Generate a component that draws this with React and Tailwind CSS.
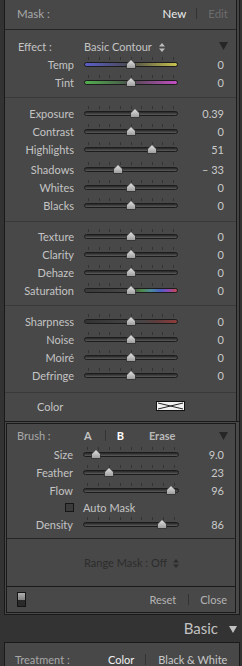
import React from "react";

const TRACK_DEFAULT = "bg-linear-to-b from-[#262626] to-[#5c5c5c]";
const TRACK_TEMP = "bg-[linear-gradient(to_right,#5a5ec8,#4a4a5a_45%,#5a5a4a_55%,#c8c24e)]";
const TRACK_TINT = "bg-[linear-gradient(to_right,#52b04e,#4a5a4a_45%,#5a4a5a_55%,#c44ec4)]";
const TRACK_SAT =
  "bg-[linear-gradient(to_right,#3a3a3a,#474747_50%,#4f8a4a_62%,#4a8aa0_72%,#4a5ec0_82%,#8a4ab8_90%,#c8484a)]";
const TRACK_SHARP = "bg-[linear-gradient(to_right,#333,#474747_60%,#5e3c3c_78%,#8e3c3c)]";

const Thumb = ({ left }) => (
  <svg
    className="absolute top-[4px]"
    style={{ left }}
    width="10"
    height="10"
    viewBox="0 0 10 10"
  >
    <defs>
      <linearGradient id="thumbFill" x1="0" y1="0" x2="0" y2="1">
        <stop offset="0" stopColor="#e6e6e6" />
        <stop offset="1" stopColor="#9a9a9a" />
      </linearGradient>
    </defs>
    <polygon
      points="5,0.5 9.5,5 9.5,9.5 0.5,9.5 0.5,5"
      fill="url(#thumbFill)"
      stroke="#2a2a2a"
      strokeWidth="0.8"
    />
  </svg>
);

const Slider = ({ pos, track = TRACK_DEFAULT, start = 84, width = 94 }) => (
  <div className="relative h-[18px] shrink-0" style={{ width }}>
    <div className="absolute left-[4px] right-[4px] top-[2px] flex justify-between">
      {Array.from({ length: 9 }).map((_, i) => (
        <div key={i} className="w-px h-[3px] bg-[#333333]" />
      ))}
    </div>
    <div className={`absolute inset-x-0 top-[7px] h-[5px] rounded-full border border-[#1c1c1c] ${track}`} />
    <Thumb left={pos - start - 5} />
  </div>
);

const Row = ({ label, pos, value, track, className = "" }) => (
  <div className={`flex items-center h-[18px] ${className}`}>
    <div className="w-[69px] text-right text-[#c4c4c4]">{label}</div>
    <div className="ml-[10px]">
      <Slider pos={pos} track={track} />
    </div>
    <div className="flex-1 text-right pr-[12px] text-[#cacaca]">{value}</div>
  </div>
);

const BrushRow = ({ label, pos, value }) => (
  <div className="flex items-center h-[18px]">
    <div className="w-[66px] text-right text-[#c4c4c4]">{label}</div>
    <div className="ml-[10px]">
      <Slider pos={pos} start={83} width={96} />
    </div>
    <div className="flex-1 text-right pr-[11px] text-[#cacaca]">{value}</div>
  </div>
);

const UpDown = ({ color }) => (
  <svg width="6" height="9" viewBox="0 0 6 9" className="inline-block">
    <polygon points="3,0 6,3.5 0,3.5" fill={color} />
    <polygon points="0,5.5 6,5.5 3,9" fill={color} />
  </svg>
);

const DownTri = ({ color = "#262626", w = 9, h = 8 }) => (
  <svg width={w} height={h} viewBox="0 0 9 8">
    <polygon points="0,0 9,0 4.5,8" fill={color} />
  </svg>
);

const Section = ({ className, children }) => (
  <div className={`border-b border-[#393939] ${className}`}>{children}</div>
);

export default function App() {
  return (
    <div className="w-[242px] h-[666px] bg-[#333333] overflow-hidden text-[11px] leading-none font-['Lato',sans-serif] select-none">
      {/* main panel */}
      <div className="ml-[4px] w-[236px] border-l border-r border-b border-[#1a1a1a] bg-[#484848]">
        <div className="flex">
          <div className="w-[231px]">
            {/* header */}
            <div className="h-[30px] border-b border-[#262626] flex items-center pb-[2px]">
              <span className="pl-[12px] text-[#a8a8a8] text-[11.5px]">Mask :</span>
              <span className="ml-auto text-[#ececec] text-[11.5px]">New</span>
              <span className="ml-[10px] w-px h-[11px] bg-[#333]" />
              <span className="ml-[11px] mr-[8px] text-[#6c6c6c] text-[11.5px]">Edit</span>
            </div>

            {/* effect */}
            <Section className="h-[68px] pt-[7px]">
              <div className="flex items-center h-[18px]">
                <span className="pl-[13px] w-[79px] text-[#c4c4c4]">Effect :</span>
                <span className="text-[#c4c4c4]">Basic Contour</span>
                <span className="ml-[7px] mt-[1px]">
                  <UpDown color="#bdbdbd" />
                </span>
                <span className="ml-auto mr-[8px]">
                  <DownTri />
                </span>
              </div>
              <Row label="Temp" pos={131} value="0" track={TRACK_TEMP} />
              <Row label="Tint" pos={131} value="0" track={TRACK_TINT} />
            </Section>

            {/* tone */}
            <Section className="h-[124px] pt-[6px]">
              <Row label="Exposure" pos={135} value="0.39" />
              <Row label="Contrast" pos={131} value="0" />
              <Row label="Highlights" pos={152} value="51" />
              <Row label="Shadows" pos={118} value="– 33" className="mt-[2px]" />
              <Row label="Whites" pos={131} value="0" />
              <Row label="Blacks" pos={131} value="0" />
            </Section>

            {/* presence */}
            <Section className="h-[84px] pt-[5px]">
              <Row label="Texture" pos={131} value="0" />
              <Row label="Clarity" pos={131} value="0" />
              <Row label="Dehaze" pos={131} value="0" />
              <Row label="Saturation" pos={131} value="0" track={TRACK_SAT} />
            </Section>

            {/* detail */}
            <Section className="h-[87px] pt-[6px]">
              <Row label="Sharpness" pos={131} value="0" track={TRACK_SHARP} />
              <Row label="Noise" pos={131} value="0" />
              <Row label="Moiré" pos={131} value="0" />
              <Row label="Defringe" pos={131} value="0" />
            </Section>

            {/* color */}
            <div className="h-[28px] flex items-center pb-[2px]">
              <span className="pl-[32px] text-[#c4c4c4]">Color</span>
              <svg width="29" height="10" viewBox="0 0 29 10" className="ml-[93px]">
                <rect x="0.5" y="0.5" width="28" height="9" fill="#f2f2f2" stroke="#111" />
                <line x1="2" y1="2" x2="27" y2="8" stroke="#222" strokeWidth="1" />
                <line x1="2" y1="8" x2="27" y2="2" stroke="#222" strokeWidth="1" />
              </svg>
            </div>
          </div>
          {/* scroll groove */}
          <div className="w-[3px] border-l border-[#1a1a1a] bg-[#444444]" />
        </div>

        <div className="h-px bg-[#1a1a1a]" />

        {/* brush box */}
        <div className="mt-px ml-px mb-px w-[230px] border border-[#1a1a1a]">
          <div className="pt-[2px]">
            <div className="flex items-center h-[19px] text-[#c4c4c4]">
              <span className="pl-[10px] w-[77px] text-[#a8a8a8]">Brush :</span>
              <span className="text-[#c4c4c4] font-bold">A</span>
              <span className="ml-[13px] w-px h-[11px] bg-[#333]" />
              <span className="ml-[11px] text-white font-bold">B</span>
              <span className="ml-[25px] text-[#b8b8b8] font-bold">Erase</span>
              <span className="ml-auto mr-[7px]">
                <DownTri />
              </span>
            </div>
            <BrushRow label="Size" pos={96} value="9.0" />
            <BrushRow label="Feather" pos={109} value="23" />
            <BrushRow label="Flow" pos={171} value="96" />
            <div className="flex items-center h-[16px]">
              <span className="ml-[58px] w-[9px] h-[9px] border border-[#161616] bg-[#3c3c3c]" />
              <span className="ml-[9px] text-[#c4c4c4]">Auto Mask</span>
            </div>
            <BrushRow label="Density" pos={162} value="86" />
          </div>
          <div className="h-[5px] border-b border-[#262626] box-content" />

          {/* range mask */}
          <div className="h-[48px] border-b border-[#1a1a1a] flex items-center">
            <span className="ml-[77px] text-[#2c2c2c]">Range Mask : Off</span>
            <span className="ml-[6px]">
              <UpDown color="#2c2c2c" />
            </span>
          </div>

          {/* footer */}
          <div className="h-[25px] flex items-center">
            <span className="ml-[10px] w-[9px] h-[15px] border border-[#141414] flex flex-col">
              <span className="flex-1 bg-linear-to-b from-[#b0b0b0] to-[#808080]" />
              <span className="flex-1 bg-[#2a2a2a]" />
            </span>
            <span className="ml-auto text-[#b4b4b4]">Reset</span>
            <span className="ml-[12px] w-px h-[11px] bg-[#333]" />
            <span className="ml-[11px] mr-[8px] text-[#b4b4b4]">Close</span>
          </div>
        </div>
      </div>

      {/* Basic header */}
      <div className="h-[27px] flex items-center justify-end pr-[5px]">
        <span className="text-[15px] text-[#c2c2c2]">Basic</span>
        <span className="ml-[11px] mt-[1px]">
          <DownTri color="#c2c2c2" w={8} h={9} />
        </span>
      </div>

      {/* treatment */}
      <div className="ml-[4px] w-[236px] h-[40px] border-l border-r border-t border-[#1a1a1a] bg-[#484848]">
        <div className="h-[32px] flex items-center">
          <span className="pl-[10px] text-[#a8a8a8] w-[103px]">Treatment :</span>
          <span className="text-[#f0f0f0]">Color</span>
          <span className="ml-[11px] w-px h-[11px] bg-[#333]" />
          <span className="ml-[12px] text-[#c8c8c8]">Black &amp; White</span>
        </div>
      </div>
    </div>
  );
}
